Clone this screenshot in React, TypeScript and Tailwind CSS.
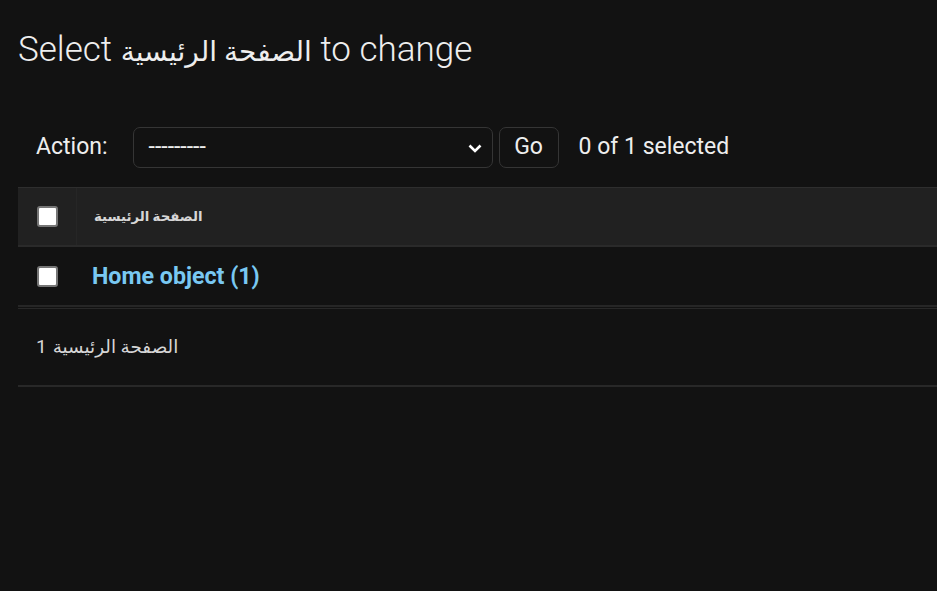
import { useState } from "react";

const font = { fontFamily: 'Roboto, "DejaVu Sans", "Noto Sans", sans-serif' };

function Box({ checked, onClick }: { checked: boolean; onClick: () => void }) {
  return (
    <span
      onClick={onClick}
      className="block w-[21px] h-[21px] rounded-[3px] border-2 border-[#767676] bg-white cursor-pointer"
    >
      {checked && (
        <svg viewBox="0 0 16 16" className="w-full h-full">
          <path d="M3.5 8.5l3 3 6-7" fill="none" stroke="#111" strokeWidth="2.2" />
        </svg>
      )}
    </span>
  );
}

export default function App() {
  const [checked, setChecked] = useState(false);

  return (
    <div className="min-h-screen w-[937px] h-[591px] overflow-hidden bg-[#121212] text-[#eeeeee]" style={font}>
      <div className="pl-[18px]">
        <h1 className="pt-[29px] h-[71px] text-[35px] leading-[42px] font-light text-[#eeeeee] whitespace-nowrap">
          Select <span className="text-[28px] leading-none font-normal">الصفحة الرئيسية</span> to change
        </h1>

        <div className="flex items-center pt-[56px] pb-[19px] pl-[18px] text-[23px] text-[#eeeeee]">
          <span className="mr-[25px]">Action:</span>
          <div className="flex items-center justify-between w-[360px] h-[41px] pl-[15px] pr-[9px] rounded-[7px] border border-[#353535] bg-[#121212]">
            <span>---------</span>
            <svg viewBox="0 0 16 16" className="w-[16px] h-[16px]">
              <path d="M2.5 5.5L8 11l5.5-5.5" fill="none" stroke="#ffffff" strokeWidth="2.6" />
            </svg>
          </div>
          <button className="ml-[6px] w-[60px] h-[41px] rounded-[7px] border border-[#353535] bg-[#121212] text-[#eeeeee]">
            Go
          </button>
          <span className="ml-[20px]">{checked ? "1" : "0"} of 1 selected</span>
        </div>

        <div className="border-t border-[#2e2e2e]">
          <div className="flex items-center h-[59px] bg-[#212121] border-b-2 border-[#2a2a2a]">
            <div className="w-[59px] h-full flex items-center pl-[19px] border-r border-[#262626]">
              <Box checked={checked} onClick={() => setChecked(!checked)} />
            </div>
            <span className="ml-[17px] text-[13.3px] font-bold text-[#d6d6d6]">الصفحة الرئيسية</span>
          </div>
          <div className="flex items-center h-[60px] border-b-2 border-[#262626]">
            <div className="w-[59px] flex items-center pl-[19px]">
              <Box checked={checked} onClick={() => setChecked(!checked)} />
            </div>
            <a href="#" className="ml-[15px] text-[23.2px] font-bold text-[#79c8f2]">
              Home object (1)
            </a>
          </div>
          <div className="mt-[1px] flex items-center h-[79px] pl-[18px] border-t border-b-2 border-[#282828] text-[#d6d6d6]">
            <span className="text-[19px]">1</span>
            <span className="ml-[6px] text-[18.4px]">الصفحة الرئيسية</span>
          </div>
        </div>
      </div>
    </div>
  );
}
